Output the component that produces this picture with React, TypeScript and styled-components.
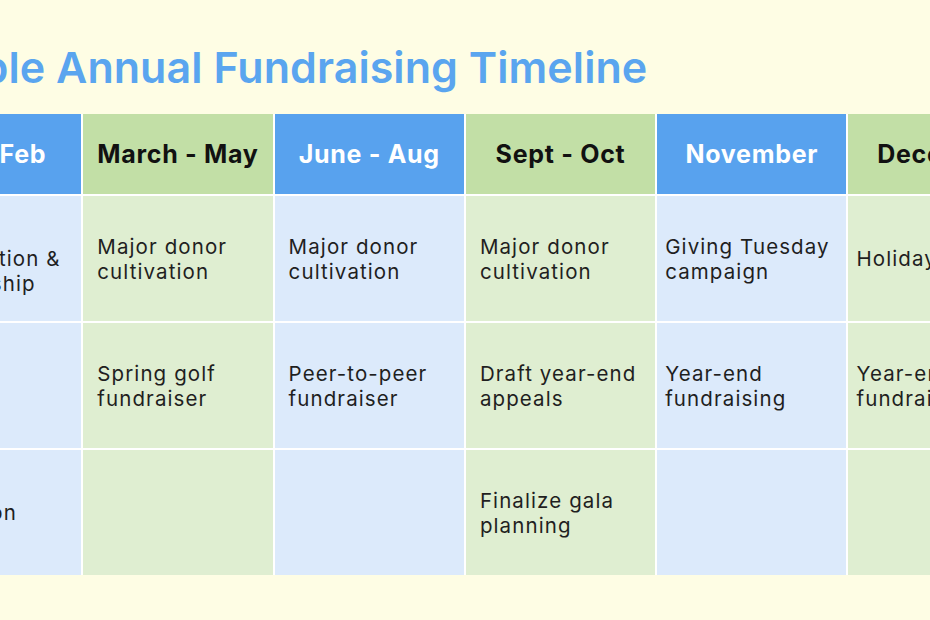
import React from "react";
import styled, { createGlobalStyle } from "styled-components";

const Global = createGlobalStyle`
  html, body {
    margin: 0;
    padding: 0;
    background: #fefde4;
    overflow: hidden;
  }
  body {
    width: 930px;
    height: 620px;
    font-family: Inter, "Open Sans", sans-serif;
  }
`;

const Slide = styled.div`
  width: 1160px;
  margin-left: -108px;
  padding-top: 40px;
  display: flex;
  flex-direction: column;
  gap: 20px;
`;

const Title = styled.h1<{ $indent: number }>`
  margin: 0 0 0 ${(p) => p.$indent}px;
  height: 54px;
  font-size: 43px;
  line-height: 54px;
  font-weight: 600;
  letter-spacing: 0.05px;
  color: #5aa5ef;
  white-space: nowrap;
`;

const Grid = styled.div`
  display: grid;
  grid-template-columns: repeat(6, 189.3px);
  grid-template-rows: 80px repeat(3, 125px);
  column-gap: 2px;
  row-gap: 2px;
  background: #ffffff;
  width: max-content;
`;

const HeadCell = styled.div<{ $blue: boolean }>`
  display: flex;
  align-items: center;
  justify-content: center;
  background: ${(p) => (p.$blue ? "#58a2ee" : "#c2dfa6")};
  color: ${(p) => (p.$blue ? "#ffffff" : "#111111")};
  font-size: 25px;
  font-weight: 700;
  letter-spacing: 0.7px;
  white-space: nowrap;
`;

const Cell = styled.div<{ $blue: boolean; $pad: number }>`
  display: flex;
  align-items: center;
  padding: 0 ${(p) => p.$pad}px;
  background: ${(p) => (p.$blue ? "#dceafb" : "#dfeed1")};
  color: #1f1f1f;
  font-size: 20.5px;
  line-height: 25px;
  font-weight: 400;
  letter-spacing: 1.1px;
`;

const headers = ["Jan - Feb", "March - May", "June - Aug", "Sept - Oct", "November", "December"];
const pads = [14, 14, 14, 14, 8, 8];

const rows: string[][] = [
  [
    "Donor appreciation & stewardship",
    "Major donor cultivation",
    "Major donor cultivation",
    "Major donor cultivation",
    "Giving Tuesday campaign",
    "Holiday appeals",
  ],
  [
    "",
    "Spring golf fundraiser",
    "Peer-to-peer fundraiser",
    "Draft year-end appeals",
    "Year-end fundraising",
    "Year-end fundraising",
  ],
  ["Evaluation", "", "", "Finalize gala planning", "", ""],
];

export default function App() {
  return (
    <>
      <Global />
      <Slide>
        <Title $indent={-2}>Sample Annual Fundraising Timeline</Title>
        <Grid>
          {headers.map((h, i) => (
            <HeadCell key={h} $blue={i % 2 === 0}>
              {h}
            </HeadCell>
          ))}
          {rows.map((row, r) =>
            row.map((text, c) => (
              <Cell key={`${r}-${c}`} $blue={c % 2 === 0} $pad={pads[c]}>
                {text}
              </Cell>
            ))
          )}
        </Grid>
      </Slide>
    </>
  );
}
